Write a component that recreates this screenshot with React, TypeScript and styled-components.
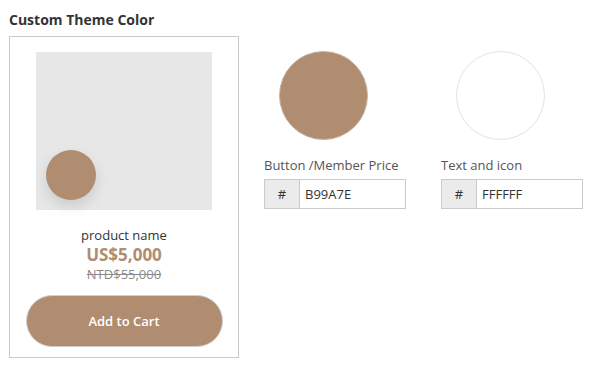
import React from 'react';
import styled, { createGlobalStyle } from 'styled-components';

const GlobalStyle = createGlobalStyle`
  body {
    margin: 0;
    background: #fff;
    font-family: 'Open Sans', 'Liberation Sans', sans-serif;
  }
`;

const Page = styled.div`
  padding: 10px 9px;
`;

const Title = styled.h3`
  margin: 0 0 7px;
  font-size: 14px;
  line-height: 19px;
  font-weight: 700;
  color: #333;
`;

const Row = styled.div`
  display: flex;
  align-items: flex-start;
`;

const Card = styled.div`
  width: 228px;
  height: 305px;
  border: 1px solid #c9c9c9;
  display: flex;
  flex-direction: column;
  align-items: center;
  padding-top: 15px;
  box-sizing: content-box;
`;

const Preview = styled.div`
  position: relative;
  width: 176px;
  height: 158px;
  background: #e7e7e7;
`;

const FloatDot = styled.div`
  position: absolute;
  left: 10px;
  bottom: 10px;
  width: 50px;
  height: 50px;
  border-radius: 50%;
  background: #b08d71;
  box-shadow: 0 6px 14px rgba(0, 0, 0, 0.12);
`;

const Name = styled.div`
  margin-top: 16px;
  font-size: 13px;
  line-height: 18px;
  color: #333;
`;

const Price = styled.div`
  font-size: 17px;
  line-height: 22px;
  font-weight: 700;
  color: #b08d71;
`;

const OldPrice = styled.div`
  font-size: 13px;
  line-height: 16px;
  color: #8a8a8a;
  text-decoration: line-through;
`;

const CartButton = styled.button`
  margin-top: 13px;
  width: 197px;
  height: 52px;
  border-radius: 26px;
  border: 1px solid #cfcfcf;
  background: #b08d71;
  color: #fff;
  font-family: 'Open Sans', 'Liberation Sans', sans-serif;
  font-size: 13px;
  font-weight: 600;
`;

const Swatches = styled.div`
  display: flex;
  gap: 35px;
  margin-left: 25px;
  margin-top: 15px;
`;

const Swatch = styled.div`
  width: 142px;
  display: flex;
  flex-direction: column;
`;

const Circle = styled.div<{ $color: string }>`
  width: 89px;
  height: 89px;
  margin-left: 15px;
  border-radius: 50%;
  box-sizing: border-box;
  background: ${(p) => p.$color};
  border: 1px solid ${(p) => (p.$color === '#ffffff' ? '#e2e2e2' : '#c9b39f')};
`;

const Label = styled.div`
  margin-top: 16px;
  font-size: 13px;
  line-height: 18px;
  color: #555;
`;

const InputGroup = styled.div`
  margin-top: 5px;
  display: flex;
  height: 30px;
  border: 1px solid #cbcbcb;
  box-sizing: border-box;
`;

const Prefix = styled.span`
  width: 34px;
  display: flex;
  align-items: center;
  justify-content: center;
  background: #ebebeb;
  border-right: 1px solid #cbcbcb;
  font-size: 13px;
  color: #333;
`;

const HexInput = styled.input`
  flex: 1;
  min-width: 0;
  border: none;
  outline: none;
  padding: 0 0 0 5px;
  font-family: 'Open Sans', 'Liberation Sans', sans-serif;
  font-size: 13px;
  color: #333;
`;

const swatches = [
  { label: 'Button /Member Price', hex: 'B99A7E', color: '#b08d71' },
  { label: 'Text and icon', hex: 'FFFFFF', color: '#ffffff' },
];

const App: React.FC = function () {
  return (
    <Page>
      <GlobalStyle />
      <Title>Custom Theme Color</Title>
      <Row>
        <Card>
          <Preview>
            <FloatDot />
          </Preview>
          <Name>product name</Name>
          <Price>US$5,000</Price>
          <OldPrice>NTD$55,000</OldPrice>
          <CartButton>Add to Cart</CartButton>
        </Card>
        <Swatches>
          {swatches.map((s) => (
            <Swatch key={s.label}>
              <Circle $color={s.color} />
              <Label>{s.label}</Label>
              <InputGroup>
                <Prefix>#</Prefix>
                <HexInput defaultValue={s.hex} />
              </InputGroup>
            </Swatch>
          ))}
        </Swatches>
      </Row>
    </Page>
  );
};

export default App;
